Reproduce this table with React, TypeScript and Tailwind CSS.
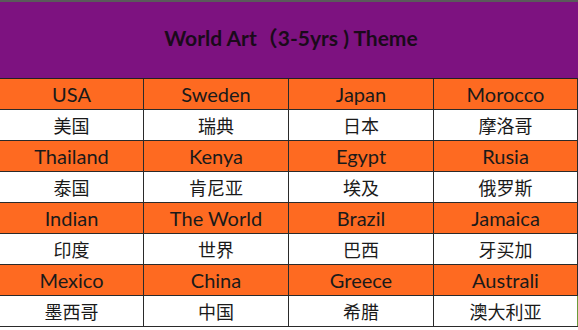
const rows: [string, string, string, string][] = [
  ['USA', 'Sweden', 'Japan', 'Morocco'],
  ['美国', '瑞典', '日本', '摩洛哥'],
  ['Thailand', 'Kenya', 'Egypt', 'Rusia'],
  ['泰国', '肯尼亚', '埃及', '俄罗斯'],
  ['Indian', 'The World', 'Brazil', 'Jamaica'],
  ['印度', '世界', '巴西', '牙买加'],
  ['Mexico', 'China', 'Greece', 'Australi'],
  ['墨西哥', '中国', '希腊', '澳大利亚'],
];

const widths = ['w-[144px]', 'w-[145px]', 'w-[145px]', 'w-[144px]'];

const App = () => {
  return (
    <div className="w-[578px] h-[330px] bg-white overflow-hidden font-['Lato','Noto_Sans_CJK_SC',sans-serif] text-[#1a1a1a]">
      <div className="h-[79px] border-t-2 border-t-[#5a5a5a] border-b border-b-[#222] bg-[#7d1280] flex items-center justify-center">
        <h1 className="text-[21px] font-bold text-[#1a0a1a] pl-[4px] pb-[4px]">
          World Art（3-5yrs ) Theme
        </h1>
      </div>
      {rows.map((row, i) => (
        <div
          key={i}
          className={`flex h-[31px] border-b border-b-[#2a2a2a] ${i % 2 === 0 ? 'bg-[#fe6a21]' : 'bg-white'}`}
        >
          {row.map((cell, j) => (
            <div
              key={j}
              className={`${widths[j]} flex items-center justify-center border-r border-r-[#2a2a2a] ${
                i % 2 === 0 ? 'text-[20px]' : "text-[18px] font-['Noto_Sans_CJK_SC',sans-serif]"
              } ${i === 7 && j === 3 ? 'border-r-[#6a9a3a]' : ''}`}
            >
              {cell}
            </div>
          ))}
        </div>
      ))}
    </div>
  );
};

export default App;
